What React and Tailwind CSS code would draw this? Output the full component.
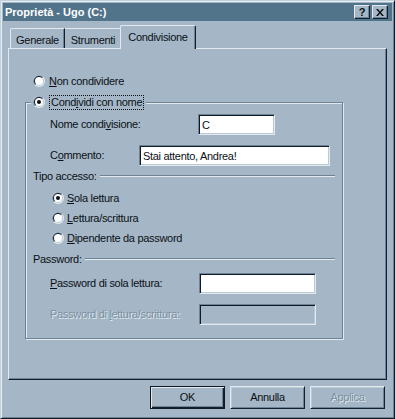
import React from 'react';

const BG = 'bg-[#a5b7c6]';

const Radio = ({ checked }) => (
  <svg width="12" height="12" viewBox="0 0 12 12" className="shrink-0">
    <circle cx="6" cy="6" r="6" fill="#e2eaf0" />
    <path d="M1.76 10.24 A6 6 0 0 1 10.24 1.76 Z" fill="#6e8496" />
    <circle cx="6" cy="6" r="5" fill="#bac9d5" />
    <path d="M2.46 9.54 A5 5 0 0 1 9.54 2.46 Z" fill="#132030" />
    <circle cx="6" cy="6" r="4" fill="#ffffff" />
    {checked && <circle cx="6" cy="6" r="2" fill="#0b1016" />}
  </svg>
);

const Field = ({ width, value = '', disabled, type = 'text' }) => (
  <input
    type={type}
    defaultValue={value}
    readOnly
    disabled={disabled}
    className={`h-[21px] ${width} ${disabled ? BG : 'bg-white'} border border-[#6e8496] border-r-[#e2eaf0] border-b-[#e2eaf0] shadow-[inset_1px_1px_0_#101a24,inset_-1px_-1px_0_#bac9d5] px-[3px] outline-none text-[11px] text-[#0b1016]`}
  />
);

const Separator = ({ label }) => (
  <div className="flex items-center h-[14px] ml-[2px]">
    <span>{label}</span>
    <div className="flex-1 ml-[3px] h-[2px] border-t border-[#6e8496] border-b border-b-[#e2eaf0]" />
  </div>
);

const Button = ({ children, isDefault, disabled }) => (
  <button
    className={`w-[75px] h-[23px] ${BG} flex items-center justify-center ${
      isDefault
        ? 'border border-[#101a24] shadow-[inset_1px_1px_0_#e2eaf0,inset_-1px_-1px_0_#132030,inset_-2px_-2px_0_#6e8496]'
        : 'border border-[#e2eaf0] border-r-[#132030] border-b-[#132030] shadow-[inset_1px_1px_0_#bac9d5,inset_-1px_-1px_0_#6e8496]'
    } ${disabled ? 'text-[#7b90a1] [text-shadow:1px_1px_0_#e2eaf0]' : 'text-[#0b1016]'}`}
  >
    {children}
  </button>
);

const TitleButton = ({ children }) => (
  <div className={`w-[16px] h-[14px] ${BG} flex items-center justify-center border border-[#e2eaf0] border-r-[#132030] border-b-[#132030] shadow-[inset_-1px_-1px_0_#6e8496] text-[#0b1016]`}>
    {children}
  </div>
);

const App = () => {
  return (
    <div className={`w-[395px] h-[419px] ${BG} border border-[#c3d1dc] border-r-[#101a24] border-b-[#101a24] shadow-[inset_1px_1px_0_#e6eef4,inset_-1px_-1px_0_#6e8496] p-[2px] flex flex-col font-['Liberation_Sans',Arial,sans-serif] text-[11px] tracking-[-0.3px] leading-none text-[#0b1016]`}>
      {/* title bar */}
      <div className="h-[18px] shrink-0 bg-[#52748b] flex items-center justify-between pl-[2px] pr-[4px]">
        <span className="text-white font-bold text-[11px] tracking-[0px]">Proprietà - Ugo (C:)</span>
        <div className="flex gap-[2px]">
          <TitleButton>
            <span className="font-bold text-[11px] mt-[1px]">?</span>
          </TitleButton>
          <TitleButton>
            <svg width="8" height="7" viewBox="0 0 8 7">
              <path d="M0 0 L2 0 L4 2.5 L6 0 L8 0 L5 3.5 L8 7 L6 7 L4 4.5 L2 7 L0 7 L3 3.5 Z" fill="#0b1016" />
            </svg>
          </TitleButton>
        </div>
      </div>

      <div className="mt-[4px] px-[5px] flex flex-col">
        {/* tabs */}
        <div className="h-[23px] flex items-end pl-[2px]">
          <div className="w-[55px] h-[20px] flex justify-center pt-[6px] border-t border-l border-[#e2eaf0] border-r border-r-[#132030] rounded-tl-[2px] shadow-[inset_-1px_0_0_#6e8496]">
            Generale
          </div>
          <div className="w-[57px] h-[20px] flex justify-center pt-[6px] border-t border-[#e2eaf0] border-r border-r-[#132030] rounded-tr-[2px] shadow-[inset_-1px_0_0_#6e8496]">
            Strumenti
          </div>
          <div className={`relative z-10 -ml-[2px] -mb-[1px] w-[76px] h-[24px] ${BG} flex justify-center pt-[6px] border-t border-l border-[#e2eaf0] border-r border-r-[#132030] rounded-t-[2px] shadow-[inset_-1px_0_0_#6e8496]`}>
            Condivisione
          </div>
        </div>

        {/* panel */}
        <div className="h-[332px] flex flex-col pt-[24px] border border-[#e2eaf0] border-r-[#132030] border-b-[#132030] shadow-[inset_-1px_-1px_0_#6e8496]">
          <div className="h-[16px] flex items-center gap-[4px] pl-[24px]">
            <Radio />
            <span><span className="underline underline-offset-[1px]">N</span>on condividere</span>
          </div>

          <fieldset className="ml-[16px] mt-[5px] w-[318px] pl-[5px] pr-[7px] pb-[13px] border border-[#6e8496] shadow-[inset_1px_1px_0_#e2eaf0,1px_1px_0_#e2eaf0]">
            <legend className={`${BG} px-[2px]`}>
              <span className="h-[16px] flex items-center gap-[4px]">
                <Radio checked />
                <span className="border border-dotted border-[#0b1016] px-[1px] py-[1px]">
                  Cond<span className="underline underline-offset-[1px]">i</span>vidi con nome
                </span>
              </span>
            </legend>

            <div className="mt-[4px] h-[21px] flex items-center">
              <span className="ml-[19px] w-[148px]">
                Nome condi<span className="underline underline-offset-[1px]">v</span>isione:
              </span>
              <Field width="w-[77px]" value="C" />
            </div>

            <div className="mt-[10px] h-[21px] flex items-center">
              <span className="ml-[19px] w-[89px]">
                C<span className="underline underline-offset-[1px]">o</span>mmento:
              </span>
              <Field width="w-[191px]" value="Stai attento, Andrea!" />
            </div>

            <div className="mt-[3px]">
              <Separator label="Tipo accesso:" />
            </div>

            <div className="mt-[5px] flex flex-col">
              <div className="h-[20px] flex items-center gap-[3px] pl-[21px]">
                <Radio checked />
                <span><span className="underline underline-offset-[1px]">S</span>ola lettura</span>
              </div>
              <div className="h-[20px] flex items-center gap-[3px] pl-[21px]">
                <Radio />
                <span><span className="underline underline-offset-[1px]">L</span>ettura/scrittura</span>
              </div>
              <div className="h-[20px] flex items-center gap-[3px] pl-[21px]">
                <Radio />
                <span><span className="underline underline-offset-[1px]">D</span>ipendente da password</span>
              </div>
            </div>

            <div className="mt-[4px]">
              <Separator label="Password:" />
            </div>

            <div className="mt-[7px] h-[21px] flex items-center">
              <span className="ml-[19px] w-[149px]">
                <span className="underline underline-offset-[1px]">P</span>assword di sola lettura:
              </span>
              <Field width="w-[117px]" type="password" />
            </div>

            <div className="mt-[10px] h-[21px] flex items-center">
              <span className="ml-[19px] w-[149px] text-[#7b90a1] [text-shadow:1px_1px_0_#e2eaf0]">
                Password di <span className="underline underline-offset-[1px]">l</span>ettura/scrittura:
              </span>
              <Field width="w-[117px]" type="password" disabled />
            </div>
          </fieldset>
        </div>
      </div>

      {/* buttons */}
      <div className="mt-[6px] flex justify-end gap-[5px] pr-[7px]">
        <Button isDefault>OK</Button>
        <Button>Annulla</Button>
        <Button disabled>Applica</Button>
      </div>
    </div>
  );
};

export default App;
